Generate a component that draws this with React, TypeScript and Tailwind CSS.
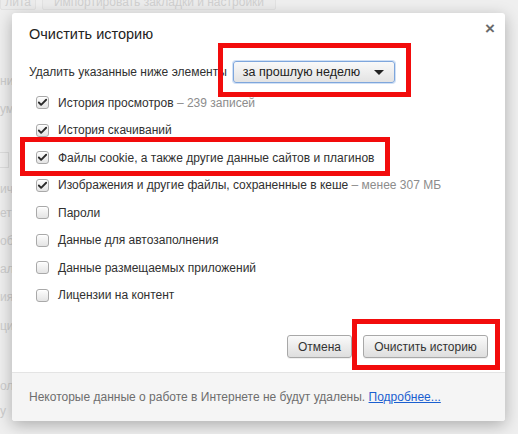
import { Check } from "lucide-react";

const items = [
  { label: "История просмотров", note: "239 записей", checked: true },
  { label: "История скачиваний", checked: true },
  { label: "Файлы cookie, а также другие данные сайтов и плагинов", checked: true },
  { label: "Изображения и другие файлы, сохраненные в кеше", note: "менее 307 МБ", checked: true },
  { label: "Пароли", checked: false },
  { label: "Данные для автозаполнения", checked: false },
  { label: "Данные размещаемых приложений", checked: false },
  { label: "Лицензии на контент", checked: false },
];

// fragments of the settings page that peek out left of the dialog
const bgBits = [
  { t: "ни", mt: "mt-[64px]" },
  { t: "ум", mt: "mt-[13px]" },
  { t: "", mt: "mt-[35px]", box: true },
  { t: "ич", mt: "mt-[14px]" },
  { t: "ет", mt: "mt-[9px]" },
  { t: "об", mt: "mt-[13px]" },
  { t: "ал", mt: "mt-[13px]" },
  { t: "ия", mt: "mt-[13px]" },
  { t: "ци", mt: "mt-[14px]" },
  { t: "ол", mt: "mt-[45px]" },
  { t: "у", mt: "mt-[10px]" },
];

function Checkbox({ checked }: { checked: boolean }) {
  return (
    <span className="flex h-[13px] w-[13px] shrink-0 items-center justify-center rounded-[3px] border border-[#a9a9a9] bg-gradient-to-b from-[#fdfdfd] to-[#e4e4e4] shadow-[inset_0_1px_0_#fff]">
      {checked && <Check className="h-[11px] w-[11px] text-[#2a2a2a]" strokeWidth={4} />}
    </span>
  );
}

export default function App() {
  return (
    <div className="relative h-[434px] w-[518px] overflow-hidden bg-[#efefef] font-['Liberation_Sans',Arial,sans-serif] text-[12px] text-[#303030]">
      {/* page behind the dialog */}
      <div className="flex gap-[6px]">
        <div className="-mt-[6px] flex h-[16px] w-[36px] items-center justify-end rounded-[2px] border border-[#e2e2e2] bg-[#ececec] pr-1 text-[#d0d0d0]">
          лита
        </div>
        <div className="-mt-[6px] flex h-[16px] w-[234px] items-center justify-center rounded-[2px] border border-[#e2e2e2] bg-[#ececec] text-[#d0d0d0]">
          Импортировать закладки и настройки
        </div>
      </div>
      <div className="flex flex-col items-start text-[#cdcdcd]">
        {bgBits.map((b, i) =>
          b.box ? (
            <div key={i} className={`${b.mt} h-[16px] w-[9px] border border-l-0 border-[#dcdcdc]`} />
          ) : (
            <div key={i} className={`${b.mt} h-[15px] leading-[15px]`}>{b.t}</div>
          )
        )}
      </div>

      {/* dialog */}
      <div className="absolute left-[12px] top-[13px] flex h-[408px] w-[493px] flex-col rounded-[3px] bg-white shadow-[0_4px_16px_rgba(0,0,0,0.28)]">
        <button className="absolute right-[10px] top-[7px] text-[17px] font-bold leading-none text-[#6a6a6a]">×</button>
        <div className="flex flex-1 flex-col px-[17px] pt-[12px]">
          <h1 className="text-[14.5px] leading-[18px] text-[#222]">Очистить историю</h1>
          <div className="mt-[18px] flex h-[22px] items-center">
            <span>Удалить указанные ниже элементы</span>
            <div className="ml-[6px] flex h-[22px] w-[162px] items-center justify-between rounded-[3px] border border-[#7ea6dc] bg-gradient-to-b from-[#f9f9f9] to-[#e3e3e3] pl-[9px] pr-[10px] shadow-[0_0_0_1px_rgba(120,165,225,0.35)]">
              <span className="text-[12.5px] text-[#222]">за прошлую неделю</span>
              <span className="h-0 w-0 border-x-[5px] border-t-[5px] border-x-transparent border-t-[#222]" />
            </div>
          </div>
          <div className="mt-[6px] flex flex-col pl-[7px]">
            {items.map((it) => (
              <div key={it.label} className="flex h-[27.5px] items-center gap-[9px]">
                <Checkbox checked={it.checked} />
                <span>
                  {it.label}
                  {it.note && <span className="text-[#8c8c8c]">{"  –  "}{it.note}</span>}
                </span>
              </div>
            ))}
          </div>
          <div className="mt-auto mb-[14px] flex justify-end gap-[11px]">
            <button className="h-[23px] w-[65px] rounded-[3px] border border-[#a8a8a8] bg-gradient-to-b from-[#fafafa] to-[#dedede] text-[#333] shadow-[0_1px_0_rgba(0,0,0,0.06)]">
              Отмена
            </button>
            <button className="h-[23px] w-[125px] rounded-[3px] border border-[#a8a8a8] bg-gradient-to-b from-[#fafafa] to-[#dedede] text-[#333] shadow-[0_1px_0_rgba(0,0,0,0.06)]">
              Очистить историю
            </button>
          </div>
        </div>
        <div className="flex h-[49px] items-center rounded-b-[3px] border-t border-[#e4e4e4] bg-[#f5f5f5] px-[17px] text-[#6e6e6e]">
          <span>
            Некоторые данные о работе в Интернете не будут удалены.{" "}
            <a className="text-[#1a5fd0] underline">Подробнее...</a>
          </span>
        </div>
      </div>

      {/* red annotation boxes */}
      <div className="absolute left-[218px] top-[43px] h-[54px] w-[193px] border-[5px] border-[#f20c0c]" />
      <div className="absolute left-[20px] top-[137px] h-[39px] w-[370px] border-[5px] border-[#f20c0c]" />
      <div className="absolute left-[352px] top-[319px] h-[51px] w-[148px] border-[5px] border-[#f20c0c]" />
    </div>
  );
}
